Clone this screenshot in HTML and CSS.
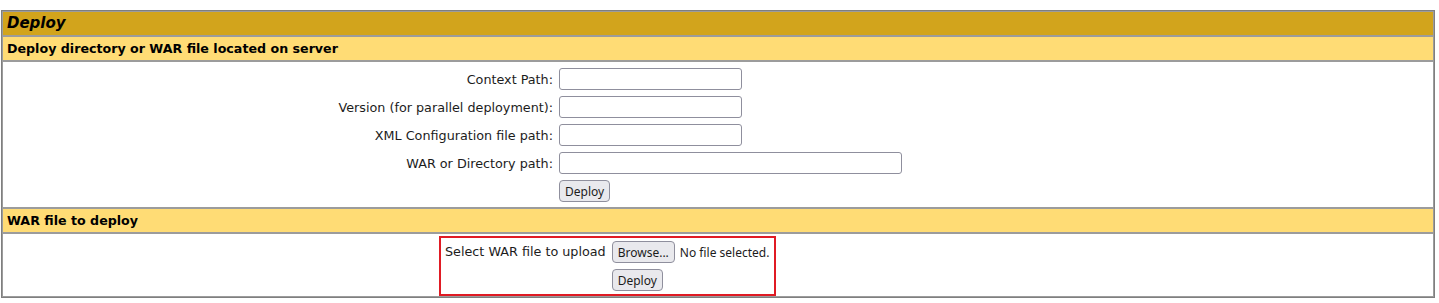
FILE: index.html
```html
<!DOCTYPE html>
<html lang="en">
<head>
    <meta charset="UTF-8">
    <title>Deploy</title>
    <link rel="stylesheet" href="styles.css">
</head>
<body>
    <div class="panel">
        <div class="row title">Deploy</div>
        <div class="row header">Deploy directory or WAR file located on server</div>
        <div class="row body server">
            <form class="server-form">
                <label class="lbl">Context Path:</label>
                <div class="fld"><input type="text" class="txt"></div>
                <label class="lbl">Version (for parallel deployment):</label>
                <div class="fld"><input type="text" class="txt"></div>
                <label class="lbl">XML Configuration file path:</label>
                <div class="fld"><input type="text" class="txt"></div>
                <label class="lbl">WAR or Directory path:</label>
                <div class="fld"><input type="text" class="txt wide"></div>
                <span></span>
                <div class="fld"><button type="button" class="btn">Deploy</button></div>
            </form>
        </div>
        <div class="row header">WAR file to deploy</div>
        <div class="row body upload">
            <form class="upload-form">
                <span class="lbl">Select WAR file to upload</span>
                <div class="fld file">
                    <button type="button" class="btn">Browse...</button>
                    <span class="nofile">No file selected.</span>
                </div>
                <span></span>
                <div class="fld"><button type="button" class="btn">Deploy</button></div>
            </form>
        </div>
    </div>
</body>
</html>
```

FILE: styles.css
```css
body {
    margin: 10px 4px 0 1px;
    font-family: "DejaVu Sans", Verdana, sans-serif;
    color: #000;
    background: #fff;
}
.panel {
    border: 1px solid #7f7f7f;
}
.row {
    border: 1px solid #9c9c9c;
}
.title {
    background: #d2a41c;
    font-size: 15px;
    font-weight: bold;
    font-style: italic;
    line-height: 17px;
    padding: 3px 4px;
}
.header {
    background: #ffdc75;
    font-size: 12.65px;
    font-weight: bold;
    line-height: 17px;
    padding: 3px 4px;
}
.body {
    background: #fff;
}
.server {
    padding: 3px 0 2px 0;
}
.server-form {
    display: grid;
    grid-template-columns: 553px 1fr;
    margin: 0;
}
.lbl {
    font-size: 12.75px;
    color: #1c1c1c;
    text-align: right;
    align-self: center;
    padding: 0 3px;
}
.fld {
    padding: 3px;
    display: flex;
    align-items: center;
}
.txt {
    box-sizing: border-box;
    width: 183px;
    height: 22px;
    border: 1px solid #8f8f9d;
    border-radius: 3px;
    padding: 0 4px;
    margin: 0;
    background: #fff;
}
.txt.wide {
    width: 343px;
}
.btn {
    box-sizing: border-box;
    height: 22px;
    padding: 0 5px;
    margin: 0;
    font-family: "Noto Sans", "DejaVu Sans", sans-serif;
    font-size: 12px;
    color: #1c1c1c;
    background: #e9e9ed;
    border: 1px solid #8f8f9d;
    border-radius: 4px;
}
.upload {
    padding-top: 2px;
}
.upload-form {
    display: grid;
    grid-template-columns: auto auto;
    width: fit-content;
    margin: 0 0 0 436px;
    border: 2px solid #e01b24;
}
.upload-form .lbl {
    align-self: start;
    padding: 6px 3px 0 4px;
    line-height: 16px;
}
.file {
    gap: 5px;
    padding-right: 5px;
}
.nofile {
    font-family: "Noto Sans", "DejaVu Sans", sans-serif;
    font-size: 12px;
    color: #1c1c1c;
}
```
